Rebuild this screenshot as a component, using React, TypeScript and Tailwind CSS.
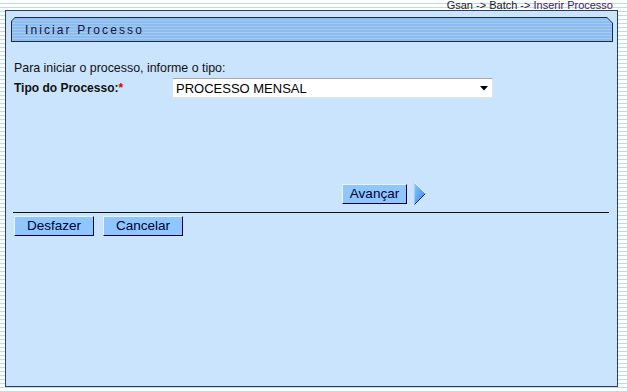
export default function App() {
  const btn =
    "h-[20px] bg-[#8ec6fd] border border-t-[#e8f3ff] border-l-[#e8f3ff] border-b-[#00004a] border-r-[#00004a] text-[13.5px] leading-none text-[#000030] flex items-center justify-center";

  return (
    <div className="w-[627px] h-[392px] overflow-hidden bg-[repeating-linear-gradient(to_bottom,#ffffff_0px,#ffffff_3px,#b8ddf5_3px,#b8ddf5_4px)] font-['Liberation_Sans',Arial,sans-serif]">
      <div className="h-[10px] pr-[14px] text-right text-[11px] leading-[10px] text-[#1a1a1a] whitespace-nowrap">
        Gsan -&gt; Batch -&gt; <span className="text-[#3b1d5c]">Inserir Processo</span>
      </div>

      <div className="ml-[5px] w-[613px] h-[377px] border border-[#2b3f5c] bg-[#cae4fd]">
        {/* title bar */}
        <div className="ml-[5px] mt-[6px] w-[602px] h-[25px] bg-[#1c2c48] p-[1px] [clip-path:polygon(4px_0,596px_0,602px_6px,602px_25px,0_25px,0_4px)]">
          <div className="h-full bg-[repeating-linear-gradient(to_bottom,#8dbcef_0px,#8dbcef_2px,#a3caf3_2px,#a3caf3_3px)] [clip-path:polygon(3px_0,595px_0,600px_5px,600px_23px,0_23px,0_3px)] flex items-center pl-[13px]">
            <span className="text-[12px] tracking-[2.1px] text-[#14143c] leading-none pt-[1px]">
              Iniciar Processo
            </span>
          </div>
        </div>

        <div className="pl-[8px]">
          <p className="mt-[19px] text-[12.4px] leading-[14px] text-[#111]">
            Para iniciar o processo, informe o tipo:
          </p>

          <div className="mt-[3px] flex items-center h-[20px]">
            <div className="w-[158px] text-[12px] font-bold text-[#111] leading-[14px]">
              Tipo do Processo:<span className="text-[#e00000]">*</span>
            </div>
            <div className="w-[321px] h-[20px] bg-white border border-[#e4e4e4] border-t-[#a9a9a9] flex items-center justify-between pl-[3px] pr-[4px]">
              <span className="text-[13px] leading-none text-black">PROCESSO MENSAL</span>
              <svg width="8" height="5" viewBox="0 0 8 5">
                <polygon points="0,0 8,0 4,4.5" fill="#000" />
              </svg>
            </div>
          </div>

          <div className="mt-[84px] flex items-center h-[23px] pl-[328px] gap-[7px]">
            <div className={`${btn} w-[65px]`}>Avançar</div>
            <svg width="12" height="23" viewBox="0 0 12 23">
              <defs>
                <linearGradient id="arr" x1="0" y1="0" x2="1" y2="1">
                  <stop offset="0" stopColor="#8cc8ff" />
                  <stop offset="1" stopColor="#2f86e6" />
                </linearGradient>
              </defs>
              <polygon points="0.5,0.5 11.5,11.5 0.5,22.5" fill="url(#arr)" />
              <polyline points="11.5,11.5 0.5,22.5" stroke="#1a2a4a" strokeWidth="1" fill="none" />
              <polyline points="0.5,0.5 11.5,11.5" stroke="#e8f3ff" strokeWidth="1" fill="none" />
            </svg>
          </div>

          <div className="mt-[7px] ml-[-1px] w-[596px] h-[1px] bg-[#111]" />

          <div className="mt-[3px] flex gap-[9px]">
            <div className={`${btn} w-[80px]`}>Desfazer</div>
            <div className={`${btn} w-[80px]`}>Cancelar</div>
          </div>
        </div>
      </div>
    </div>
  );
}
